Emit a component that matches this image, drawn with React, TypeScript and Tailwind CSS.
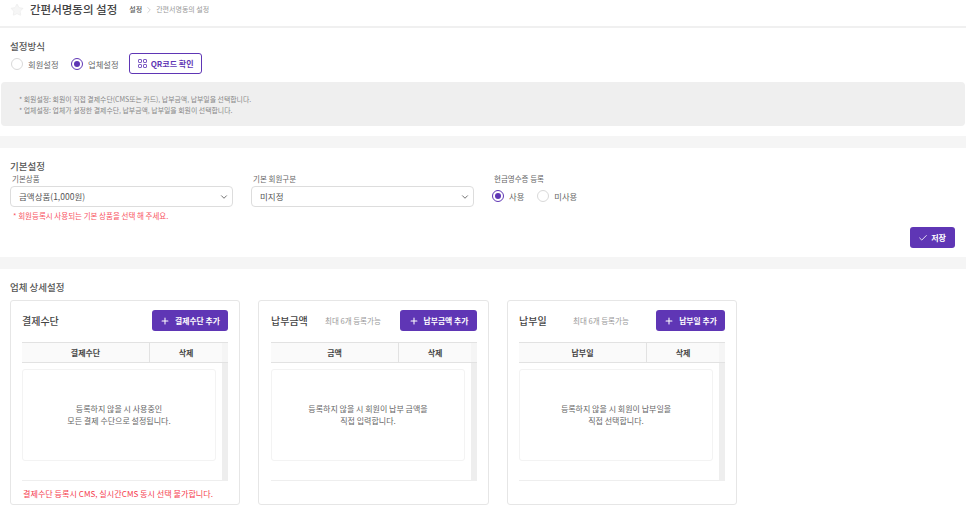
import { Check, ChevronDown, ChevronRight, Plus, Star } from "lucide-react";

const Radio = ({ label, checked }: { label: string; checked?: boolean }) => (
  <div className="flex items-center gap-[5px]">
    <span
      className={`flex h-[12px] w-[12px] items-center justify-center rounded-full border bg-white ${
        checked ? "border-[#5f36b5]" : "border-[#d9d9d9]"
      }`}
    >
      {checked && <span className="h-[6px] w-[6px] rounded-full bg-[#5f36b5]" />}
    </span>
    <span className="text-[8.3px] leading-[12px] text-[#666]">{label}</span>
  </div>
);

const Select = ({ value }: { value: string }) => (
  <div className="flex h-[21px] items-center justify-between rounded-[4px] border border-[#dddddd] bg-white pl-[8px] pr-[3px]">
    <span className="text-[8.5px] text-[#555]">{value}</span>
    <ChevronDown size={10} strokeWidth={2} className="text-[#555]" />
  </div>
);

interface PanelProps {
  title: string;
  hint?: string;
  addLabel: string;
  buttonWidth: string;
  column: string;
  lines: string[];
  note?: string;
  extraClass: string;
}

const Panel = ({ title, hint, addLabel, buttonWidth, column, lines, note, extraClass }: PanelProps) => (
  <div className={`h-[205px] rounded-[3px] border border-[#e6e6e6] bg-white pt-[9px] ${extraClass}`}>
    <div className="flex h-[21px] items-center pr-[11px]">
      <span className="w-[54px] whitespace-nowrap text-[10px] font-medium text-[#444]">{title}</span>
      {hint && <span className="whitespace-nowrap text-[7.5px] text-[#999]">{hint}</span>}
      <button
        className={`ml-auto flex h-[21px] items-center justify-center gap-[5px] rounded-[3px] bg-[#5f36b5] text-[7.8px] font-bold text-white ${buttonWidth}`}
      >
        <Plus size={10} strokeWidth={2.5} />
        {addLabel}
      </button>
    </div>
    <div className="mt-[11px] mr-[11px]">
      <div className="flex h-[21px] border-y border-[#e2e2e2] bg-[#fafafa] text-[8px] font-bold text-[#444]">
        <div className="flex w-[128px] items-center justify-center border-r border-[#e2e2e2]">{column}</div>
        <div className="flex w-[72px] items-center justify-center">삭제</div>
        <div className="flex-1 bg-[#f5f5f5]" />
      </div>
      <div className="flex h-[118px] border-b border-[#eeeeee]">
        <div className="flex-1 pt-[6px] pr-[6px]">
          <div className="flex h-[92px] flex-col items-center justify-center rounded-[3px] border border-[#f3f3f3] text-[8px] leading-[12px] text-[#666]">
            {lines.map((line) => (
              <span key={line}>{line}</span>
            ))}
          </div>
        </div>
        <div className="w-[6px] bg-[#eeeeee]" />
      </div>
    </div>
    {note && <p className="mt-[7px] whitespace-nowrap pl-[1px] text-[8.1px] leading-[12px] text-[#f5404f]">{note}</p>}
  </div>
);

export default function App() {
  return (
    <div className="h-[512px] w-[966px] overflow-hidden bg-white font-['Noto_Sans_CJK_KR','Noto_Sans',sans-serif]">
      {/* Header */}
      <div className="flex h-[28px] items-center border-b-2 border-[#f0f0f0] pl-[10px] pb-[7px]">
        <Star size={14} strokeWidth={1} className="fill-[#f6f6f6] text-[#e8e8e8]" />
        <h1 className="ml-[6px] text-[11.5px] font-medium text-[#444]">간편서명동의 설정</h1>
        <span className="ml-[12px] text-[7px] font-medium text-[#555]">설정</span>
        <ChevronRight size={10} strokeWidth={1} className="ml-[2px] text-[#999]" />
        <span className="ml-[2px] text-[7px] text-[#999]">간편서명동의 설정</span>
      </div>

      {/* 설정방식 */}
      <section className="h-[108px]">
        <div className="px-[10px] pt-[12px]">
          <h2 className="text-[9.5px] leading-[13px] font-medium text-[#555]">설정방식</h2>
          <div className="flex items-center pl-[1px]">
            <Radio label="회원설정" />
            <div className="ml-[12.5px]">
              <Radio label="업체설정" checked />
            </div>
            <button className="ml-[10.5px] flex h-[21px] w-[73px] items-center justify-center gap-[4px] rounded-[3px] border border-[#5f36b5] text-[8px] font-bold text-[#5f36b5]">
              <svg width="9" height="9" viewBox="0 0 9 9" fill="none" stroke="currentColor" strokeWidth="0.8">
                <rect x="0.5" y="0.5" width="3" height="3" rx="0.5" />
                <rect x="5.5" y="0.5" width="3" height="3" rx="0.5" />
                <rect x="0.5" y="5.5" width="3" height="3" rx="0.5" />
                <rect x="5.5" y="5.5" width="3" height="3" rx="0.5" />
              </svg>
              QR코드 확인
            </button>
          </div>
        </div>
        <div className="mx-[1px] mt-[8px] flex h-[44px] flex-col justify-center rounded-[4px] bg-[#efefef] pl-[18px] pt-[1px] text-[6.9px] leading-[11px] text-[#888]">
          <p>* 회원설정: 회원이 직접 결제수단(CMS또는 카드), 납부금액, 납부일을 선택합니다.</p>
          <p>* 업체설정: 업체가 설정한 결제수단, 납부금액, 납부일을 회원이 선택합니다.</p>
        </div>
      </section>

      <div className="h-[12px] bg-[#f5f5f5]" />

      {/* 기본설정 */}
      <section className="h-[109px] px-[10px] pt-[12px]">
        <h2 className="text-[9.5px] leading-[13px] font-medium text-[#555]">기본설정</h2>
        <div className="flex">
          <div className="w-[223px]">
            <label className="block pl-[2px] text-[7.5px] leading-[12px] text-[#666]">기본상품</label>
            <div className="mt-[1px]">
              <Select value="금액상품(1,000원)" />
            </div>
            <p className="mt-[3px] pl-[3px] text-[7.5px] leading-[12px] text-[#f8545f]">
              * 회원등록시 사용되는 기본 상품을 선택 해 주세요.
            </p>
          </div>
          <div className="ml-[18px] w-[223px]">
            <label className="block pl-[2px] text-[7.5px] leading-[12px] text-[#666]">기본 회원구분</label>
            <div className="mt-[1px]">
              <Select value="미지정" />
            </div>
          </div>
          <div className="ml-[19px]">
            <label className="block pl-[1px] text-[7.5px] leading-[12px] text-[#666]">현금영수증 등록</label>
            <div className="-ml-[1px] mt-[5px] flex items-center gap-[13px]">
              <Radio label="사용" checked />
              <Radio label="미사용" />
            </div>
          </div>
        </div>
        <div className="mt-[5px] flex justify-end pr-[1px]">
          <button className="flex h-[21px] w-[45px] items-center justify-center gap-[3px] rounded-[3px] bg-[#5f36b5] pr-[1px] text-[8px] font-bold text-white">
            <Check size={10} strokeWidth={2} />
            저장
          </button>
        </div>
      </section>

      <div className="h-[12px] bg-[#f5f5f5]" />

      {/* 업체 상세설정 */}
      <section className="px-[10px] pt-[12px]">
        <h2 className="text-[9.5px] leading-[13px] font-medium text-[#555]">업체 상세설정</h2>
        <div className="mt-[6px] flex gap-[18px]">
          <Panel
            title="결제수단"
            addLabel="결제수단 추가"
            buttonWidth="w-[76px]"
            column="결제수단"
            lines={["등록하지 않을 시 사용중인", "모든 결제 수단으로 설정됩니다."]}
            note="결제수단 등록시 CMS, 실시간CMS 동시 선택 불가합니다."
            extraClass="w-[230px] pl-[11px]"
          />
          <Panel
            title="납부금액"
            hint="최대 6개 등록가능"
            addLabel="납부금액 추가"
            buttonWidth="w-[77px]"
            column="금액"
            lines={["등록하지 않을 시 회원이 납부 금액을", "직접 입력합니다."]}
            extraClass="w-[231px] pl-[12px]"
          />
          <Panel
            title="납부일"
            hint="최대 6개 등록가능"
            addLabel="납부일 추가"
            buttonWidth="w-[69px]"
            column="납부일"
            lines={["등록하지 않을 시 회원이 납부일을", "직접 선택합니다."]}
            extraClass="w-[230px] pl-[11px]"
          />
        </div>
      </section>
    </div>
  );
}
